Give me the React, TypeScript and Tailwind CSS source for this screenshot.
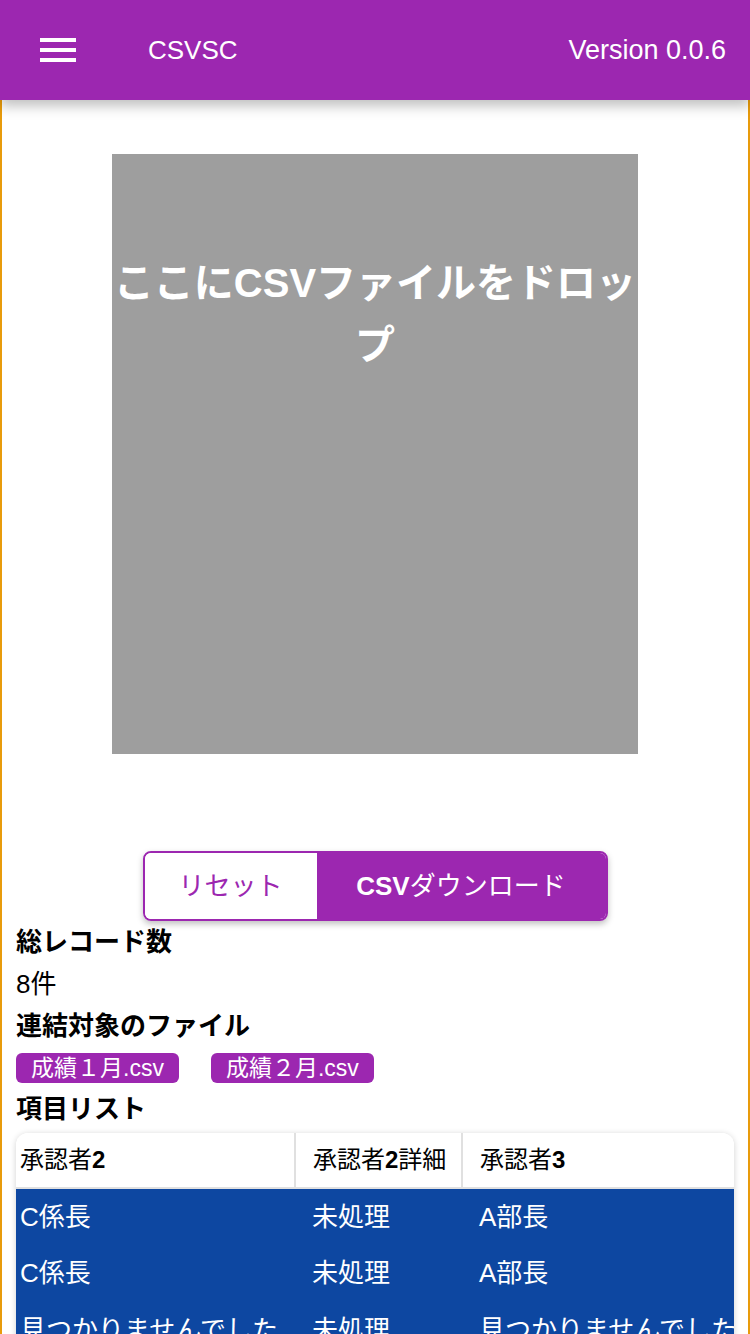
const FONT = { fontFamily: '"Liberation Sans", "Noto Sans CJK JP", sans-serif' };

const rows = [
  ["C係長", "未処理", "A部長"],
  ["C係長", "未処理", "A部長"],
  ["見つかりませんでした", "未処理", "見つかりませんでした"],
];

export default function App() {
  return (
    <div style={FONT} className="min-h-[1334px] bg-white text-black">
      {/* ヘッダー */}
      <header className="relative z-10 h-[100px] bg-[#9c27b0] flex items-center px-[40px] text-white shadow-[0_6px_12px_rgba(0,0,0,0.25)]">
        <div className="flex flex-col gap-[6px] w-[36px]">
          <span className="block h-[4px] bg-white" />
          <span className="block h-[4px] bg-white" />
          <span className="block h-[4px] bg-white" />
        </div>
        <div className="ml-[72px] text-[26px] font-medium">CSVSC</div>
        <div className="ml-auto mr-[-16px] text-[27px]">Version 0.0.6</div>
      </header>

      <main className="border-x-2 border-[#e89b0c] min-h-[1234px] px-[14px]">
        {/* ドロップエリア */}
        <div className="pt-[54px] flex justify-center">
          <div className="w-[526px] h-[600px] bg-[#9e9e9e] pt-[98px] text-center text-white text-[40px] font-bold leading-[62px]">
            ここにCSVファイルをドロップ
          </div>
        </div>

        {/* ボタン */}
        <div className="mt-[97px] flex justify-center">
          <div className="flex h-[70px] rounded-[8px] border-2 border-[#9c27b0] overflow-hidden shadow-[0_3px_6px_rgba(0,0,0,0.25)]">
            <button className="w-[172px] bg-white text-[#9c27b0] text-[26px]">リセット</button>
            <button className="w-[289px] bg-[#9c27b0] text-white text-[26px]">
              <span className="font-bold">CSV</span>ダウンロード
            </button>
          </div>
        </div>

        <div className="text-[26px] leading-[42px]">
          <div className="font-bold">総レコード数</div>
          <div>8件</div>
          <div className="font-bold">連結対象のファイル</div>
          <div className="flex gap-[32px] h-[42px] items-center">
            <span className="h-[30px] px-[15px] rounded-[6px] bg-[#9c27b0] text-white text-[23px] leading-[30px]">成績１月.csv</span>
            <span className="h-[30px] px-[15px] rounded-[6px] bg-[#9c27b0] text-white text-[23px] leading-[30px]">成績２月.csv</span>
          </div>
          <div className="font-bold leading-[40px]">項目リスト</div>
        </div>

        {/* テーブル */}
        <div className="mt-[4px] rounded-[12px] overflow-hidden shadow-[0_1px_6px_rgba(0,0,0,0.18)]">
          <table className="table-fixed border-collapse w-[900px]">
            <colgroup>
              <col className="w-[279px]" />
              <col className="w-[167px]" />
              <col className="w-[454px]" />
            </colgroup>
            <thead>
              <tr className="h-[55px] bg-white border-b-2 border-[#e0e0e0]">
                <th className="text-left font-normal text-[24px] pl-[4px] border-r-2 border-[#e0e0e0]">承認者<b>2</b></th>
                <th className="text-left font-normal text-[24px] pl-[17px] border-r-2 border-[#e0e0e0]">承認者<b>2</b>詳細</th>
                <th className="text-left font-normal text-[24px] pl-[17px]">承認者<b>3</b></th>
              </tr>
            </thead>
            <tbody className="bg-[#0d47a1] text-white text-[26px]">
              {rows.map((r, i) => (
                <tr key={i} className="h-[57px]">
                  <td className="pl-[4px] whitespace-nowrap overflow-hidden">{r[0]}</td>
                  <td className="pl-[17px] whitespace-nowrap">{r[1]}</td>
                  <td className="pl-[17px] whitespace-nowrap">{r[2]}</td>
                </tr>
              ))}
            </tbody>
          </table>
        </div>
      </main>
    </div>
  );
}
